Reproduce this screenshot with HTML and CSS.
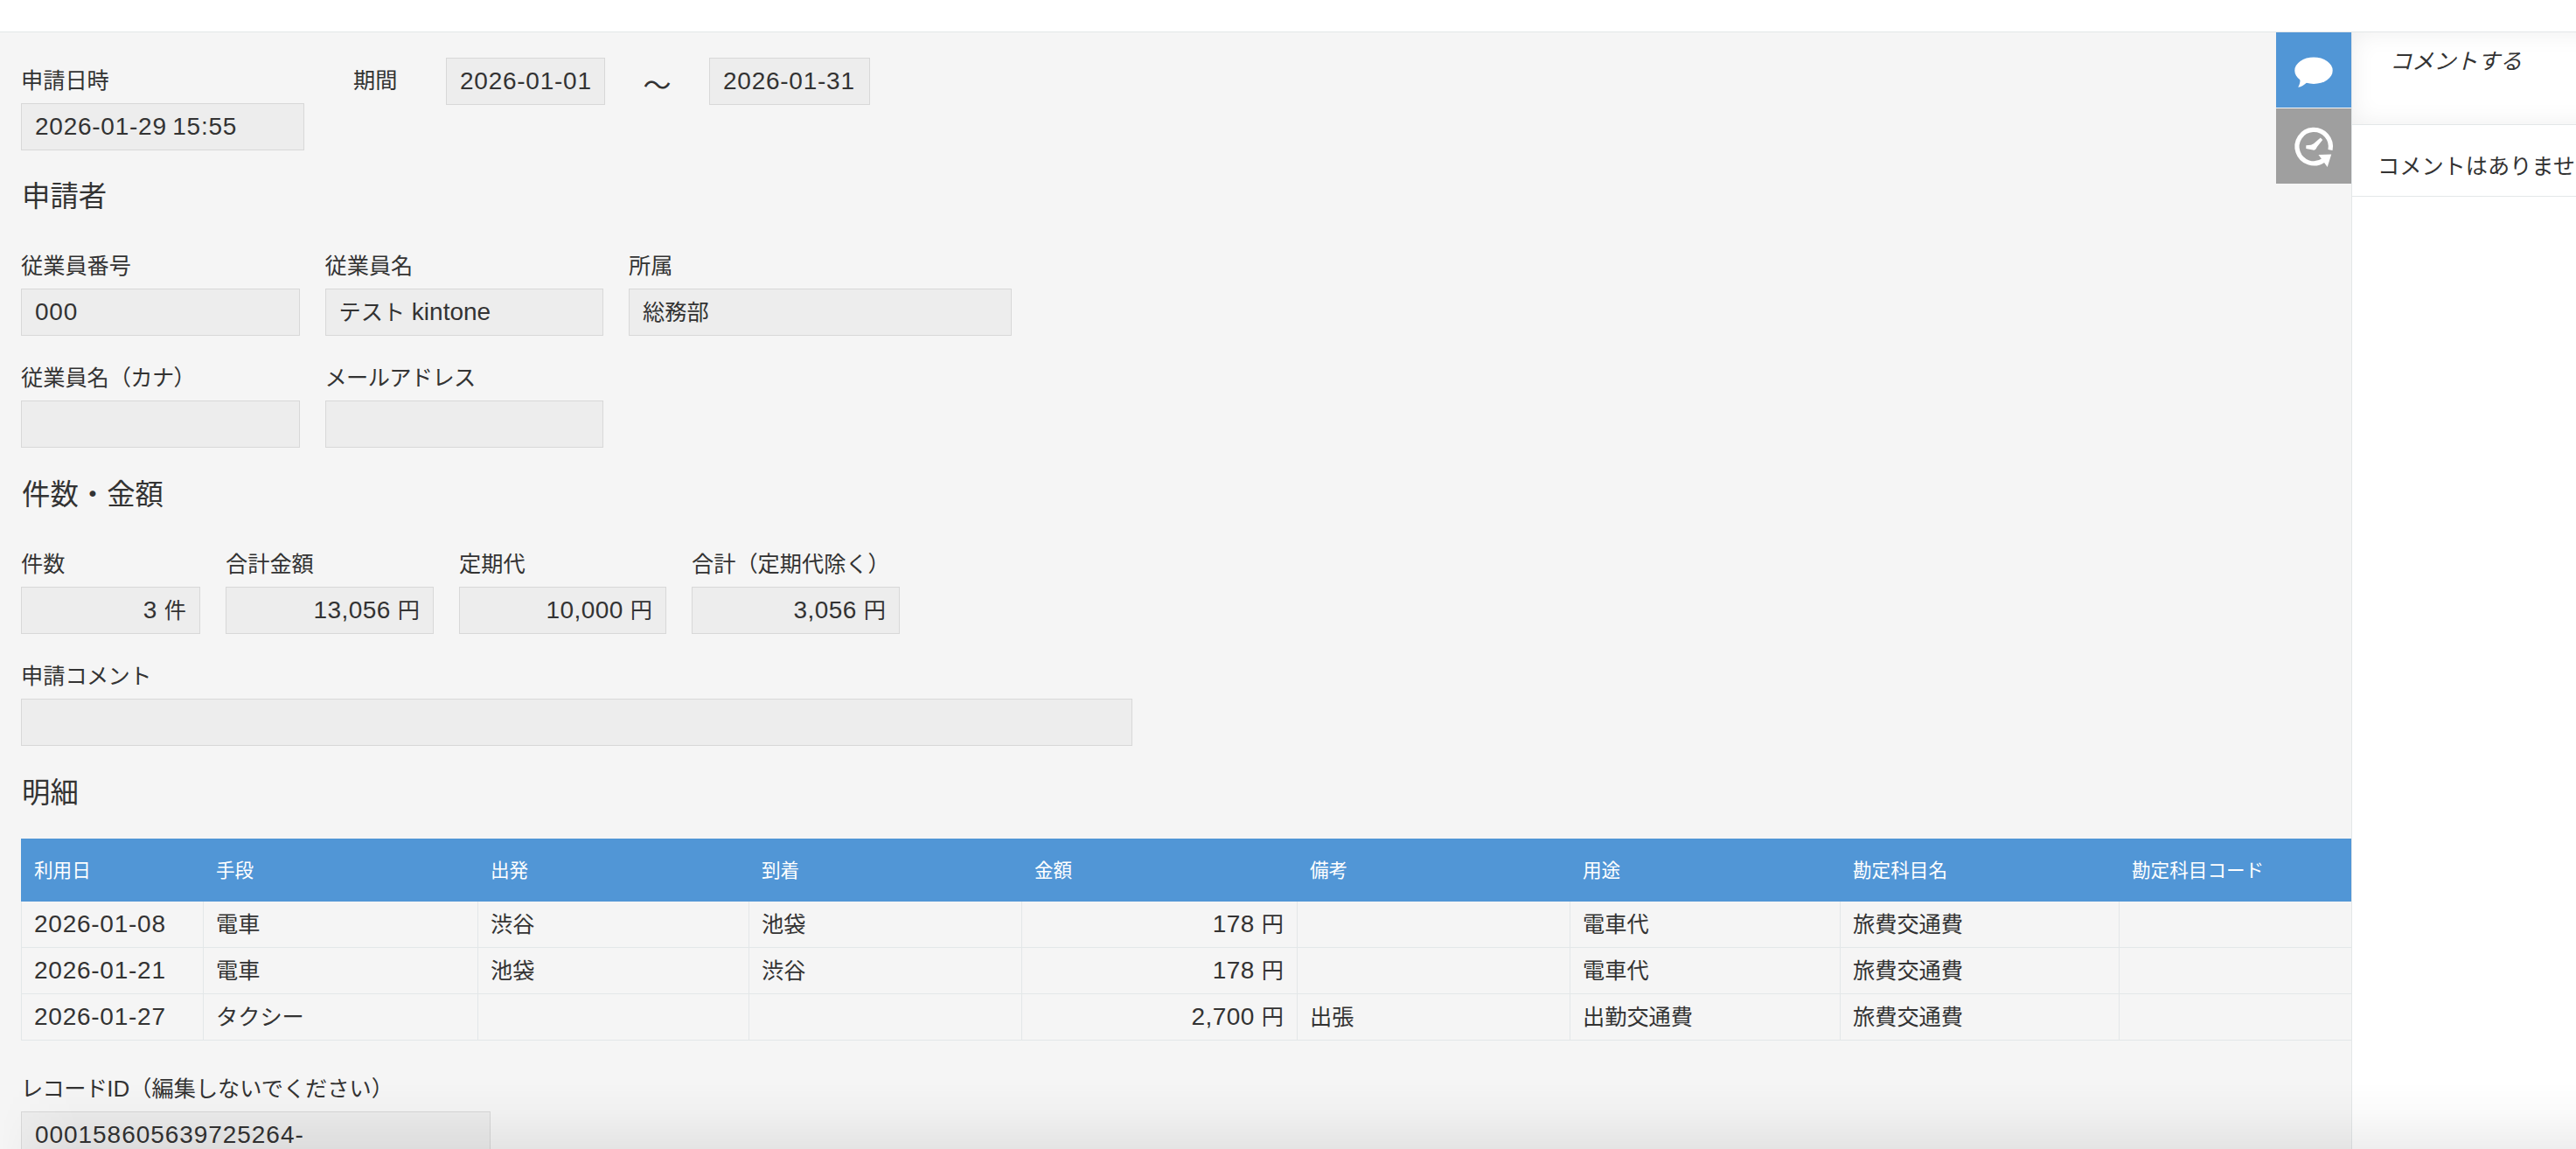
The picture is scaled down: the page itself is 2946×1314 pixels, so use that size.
FILE: index.html
```
<!DOCTYPE html>
<html lang="ja">
<head>
<meta charset="utf-8">
<title>経費申請</title>
<link rel="stylesheet" href="styles.css">
</head>
<body>
<div class="page">
  <div class="topbar"></div>
  <div class="content">
    <main class="record">
      <div class="row">
        <div class="field w-datetime"><div class="label">申請日時</div><div class="value"><span class="latin">2026-01-29 15:55</span></div></div>
        <div class="period">
          <div class="period-label">期間</div>
          <div class="value from"><span class="latin">2026-01-01</span></div>
          <div class="tilde">〜</div>
          <div class="value to"><span class="latin">2026-01-31</span></div>
        </div>
      </div>
      <h2 class="heading">申請者</h2>
      <div class="row">
        <div class="field w-person"><div class="label">従業員番号</div><div class="value"><span class="latin">000</span></div></div>
        <div class="field w-person"><div class="label">従業員名</div><div class="value">テスト<span class="word"> kintone</span></div></div>
        <div class="field w-dept"><div class="label">所属</div><div class="value">総務部</div></div>
      </div>
      <div class="row next">
        <div class="field w-person"><div class="label">従業員名<span class="kana">（カナ）</span></div><div class="value"></div></div>
        <div class="field w-person"><div class="label"><span class="kana">メールアドレス</span></div><div class="value"></div></div>
      </div>
      <h2 class="heading tall">件数・金額</h2>
      <div class="row">
        <div class="field w-count"><div class="label">件数</div><div class="value amount"><span class="latin">3 </span>件</div></div>
        <div class="field w-total"><div class="label">合計金額</div><div class="value amount"><span class="latin">13,056 </span>円</div></div>
        <div class="field w-pass"><div class="label">定期代</div><div class="value amount"><span class="latin">10,000 </span>円</div></div>
        <div class="field w-total"><div class="label">合計（定期代除く）</div><div class="value amount"><span class="latin">3,056 </span>円</div></div>
      </div>
      <div class="row next">
        <div class="field w-comment"><div class="label">申請<span class="kana">コメント</span></div><div class="value"></div></div>
      </div>
      <h2 class="heading tall">明細</h2>
      <table class="details">
        <colgroup><col class="c1"><col class="c2"><col class="c3"><col class="c4"><col class="c5"><col class="c6"><col class="c7"><col class="c8"><col class="c9"></colgroup>
        <thead>
          <tr><th>利用日</th><th>手段</th><th>出発</th><th>到着</th><th>金額</th><th>備考</th><th>用途</th><th>勘定科目名</th><th>勘定科目コード</th></tr>
        </thead>
        <tbody>
          <tr><td><span class="latin">2026-01-08</span></td><td>電車</td><td>渋谷</td><td>池袋</td><td class="amount"><span class="latin">178 </span>円</td><td></td><td>電車代</td><td>旅費交通費</td><td></td></tr>
          <tr><td><span class="latin">2026-01-21</span></td><td>電車</td><td>池袋</td><td>渋谷</td><td class="amount"><span class="latin">178 </span>円</td><td></td><td>電車代</td><td>旅費交通費</td><td></td></tr>
          <tr><td><span class="latin">2026-01-27</span></td><td>タクシー</td><td></td><td></td><td class="amount"><span class="latin">2,700 </span>円</td><td>出張</td><td>出勤交通費</td><td>旅費交通費</td><td></td></tr>
        </tbody>
      </table>
      <div class="row last">
        <div class="field w-id"><div class="label"><span class="kana">レコード</span><span class="word">ID</span>（編集しないでください）</div><div class="value"><span class="latin wide">000158605639725264-</span></div></div>
      </div>
    </main>
    <nav class="tabs">
      <button class="tab active" aria-label="コメント">
        <svg viewBox="0 0 86 86"><ellipse cx="43" cy="43.7" rx="21.7" ry="15.3"/><path d="M27 52 Q28.5 57 25.2 62.8 Q30.500 62 35.500 57Z"/></svg>
      </button>
      <button class="tab" aria-label="履歴">
        <svg viewBox="0 0 86 86"><path class="ring" d="M62 47.500 A19.200 19.200 0 1 0 54 59.500"/><path d="M48.500 53 L63.200 52.600 L58.700 67Z"/><path d="M34.300 42.200 L40 41.700 L43 40.200 L50.800 33.500 L53.200 36 L46.800 44 Q45 49 41 47.200 L34.300 45.900Z"/></svg>
      </button>
    </nav>
    <aside class="comments">
      <div class="compose">コメントする</div>
      <div class="empty">コメントはありません。</div>
    </aside>
  </div>
  <div class="bottom-shade"></div>
</div>
</body>
</html>
```
FILE: styles.css
```
* { box-sizing: border-box; }
body {
  margin: 0;
  overflow: hidden;
  color: #333;
  font-family: "Noto Sans CJK JP", sans-serif;
  font-size: 25.2px;
}
.page { position: relative; height: 1314px; overflow: hidden; background: #fff; }
.topbar { height: 37px; border-bottom: 1px solid #e3e7e8; }
.content { position: relative; display: flex; height: 1277px; background: #f5f5f5; }
.record { width: 2689px; padding: 28px 0 0 24px; overflow: hidden; }

.row { display: flex; gap: 29px; }
.row.next { margin-top: 21px; }
.row.last { margin-top: 28px; }
.label { height: 53px; line-height: 50px; white-space: nowrap; }
.kana { letter-spacing: -0.6px; }
.value {
  height: 54px;
  padding: 0 15px;
  border: 1px solid #d8d8d8;
  background: #ededed;
  line-height: 48px;
  white-space: nowrap;
}
.amount { text-align: right; }
.latin, .word { font-family: "Liberation Sans", sans-serif; font-size: 28px; line-height: 1; white-space: pre; }
.latin { letter-spacing: 0.75px; word-spacing: -2px; }
.latin.wide { letter-spacing: 0.95px; }
.amount .latin { letter-spacing: 0.4px; word-spacing: 0; }
.label .word { font-size: 26px; }

.w-datetime { width: 324px; }
.w-person { width: 318.500px; }
.w-dept { width: 438px; }
.w-count { width: 205px; }
.w-total { width: 238px; }
.w-pass { width: 237px; }
.w-comment { width: 1271px; }
.w-id { width: 537px; }

.period { display: flex; margin: 1px 0 0 27px; }
.period-label { width: 106px; height: 50px; line-height: 48px; }
.period .value { width: 182px; }
.period .to { width: 184px; }
.tilde { width: 119px; line-height: 58px; font-size: 32px; text-align: center; }

.heading { height: 105px; margin: 0; padding-left: 1px; line-height: 100px; font-size: 32.4px; font-weight: 400; }
.heading.tall { height: 106px; line-height: 101px; }

.details { width: 2699px; table-layout: fixed; border-collapse: separate; border-spacing: 0; }
.c1 { width: 209px; } .c2 { width: 314px; } .c3 { width: 310px; }
.c4 { width: 312px; } .c5 { width: 315px; } .c6 { width: 312px; }
.c7 { width: 309px; } .c8 { width: 319px; } .c9 { width: 299px; }
.details th {
  height: 72px; padding: 0 14px 2px; background: #5196d6; color: #fff;
  font-size: 21.600px; font-weight: 400; line-height: 70px; text-align: left;
}
.details td {
  height: 53px; padding: 0 15px 4px 14px; line-height: 48px; white-space: nowrap;
  border-right: 1px solid #e3e7e8; border-bottom: 1px solid #e3e7e8;
}
.details th:first-child { padding-left: 15px; }
.details td:first-child { border-left: 1px solid #e3e7e8; }
.details td.amount { text-align: right; }

.tabs { position: absolute; left: 2603px; top: 0; display: flex; flex-direction: column; gap: 1px; background: #f5f5f5; }
.tab { width: 86px; height: 86px; padding: 0; border: 0; background: #9f9f9f; }
.tab.active { background: #5196d6; }
.tab svg { display: block; width: 86px; height: 86px; fill: #fff; }
.ring { fill: none; stroke: #fff; stroke-width: 5.200; }

.comments { flex: 1; min-width: 0; border-left: 1px solid #e3e7e8; background: #fff; overflow: hidden; white-space: nowrap; }
.compose {
  width: 320px; height: 106px; padding: 7px 0 0 43px; line-height: 48px; font-style: italic;
  border-bottom: 1px solid #e3e7e8; box-shadow: inset 0 0 28px #eee;
}
.empty { height: 82px; padding-left: 29px; line-height: 91px; border-bottom: 1px solid #e3e7e8; }

.bottom-shade {
  position: absolute; left: 0; right: 0; bottom: 0; height: 76px;
  background: linear-gradient(to bottom, rgba(0,0,0,0), rgba(0,0,0,0.018) 45%, rgba(0,0,0,0.068));
  -webkit-mask-image: linear-gradient(to right, transparent, #000 90px);
  mask-image: linear-gradient(to right, transparent, #000 90px);
}
```
